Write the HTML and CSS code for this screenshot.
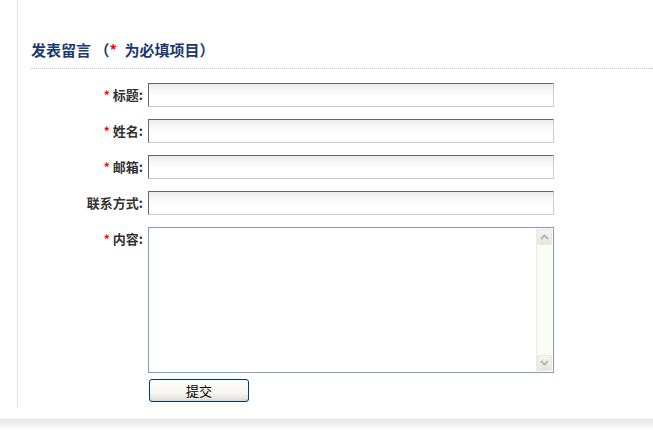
FILE: index.html
```html
<!DOCTYPE html>
<html lang="zh-CN">
<head>
<meta charset="utf-8">
<title>发表留言</title>
<link rel="stylesheet" href="styles.css">
</head>
<body>
<div class="wrap">
  <h2 class="title">发表留言 （<span class="req req-h">*</span> 为必填项目）</h2>
  <form class="form">
    <div class="row">
      <label class="lbl"><span class="req">*</span> 标题:</label>
      <input class="inp" type="text">
    </div>
    <div class="row">
      <label class="lbl"><span class="req">*</span> 姓名:</label>
      <input class="inp" type="text">
    </div>
    <div class="row">
      <label class="lbl"><span class="req">*</span> 邮箱:</label>
      <input class="inp" type="text">
    </div>
    <div class="row">
      <label class="lbl">联系方式:</label>
      <input class="inp" type="text">
    </div>
    <div class="row row-top">
      <label class="lbl lbl-top"><span class="req">*</span> 内容:</label>
      <div class="area">
        <textarea class="ta"></textarea>
        <div class="sb">
          <div class="sb-btn">
            <svg width="9" height="6" viewBox="0 0 9 6"><path d="M1 5 L4.5 1.5 L8 5" fill="none" stroke="#b8b8ae" stroke-width="2"/></svg>
          </div>
          <div class="sb-track"></div>
          <div class="sb-btn">
            <svg width="9" height="6" viewBox="0 0 9 6"><path d="M1 1 L4.5 4.5 L8 1" fill="none" stroke="#b8b8ae" stroke-width="2"/></svg>
          </div>
        </div>
      </div>
    </div>
    <div class="row row-btn">
      <button class="btn" type="button">提交</button>
    </div>
  </form>
</div>
<div class="foot"></div>
</body>
</html>
```

FILE: styles.css
```css
html, body {
  margin: 0;
  padding: 0;
  background: #fff;
}
body {
  font-family: "Noto Sans CJK SC", "Liberation Sans", sans-serif;
  width: 653px;
  overflow: hidden;
}
.wrap {
  margin-left: 17px;
  border-left: 1px dotted #cfcfcf;
  padding-top: 40px;
  padding-bottom: 5px;
}
.title {
  margin: 0 0 0 13px;
  font-size: 15px;
  line-height: 20px;
  font-weight: bold;
  color: #1b3a6f;
  padding-bottom: 8px;
  border-bottom: 1px dotted #c4c4c4;
}
.req {
  color: #f00;
  font-weight: bold;
}
.req-h {
  margin-right: 4px;
}
.form {
  margin: 14px 0 0 0;
}
.row {
  display: flex;
  align-items: center;
  margin-bottom: 12px;
}
.row-top {
  align-items: flex-start;
  margin-bottom: 6px;
}
.row-btn {
  margin-bottom: 0;
  padding-left: 131px;
}
.lbl {
  width: 125px;
  margin-right: 5px;
  text-align: right;
  font-size: 13px;
  font-weight: bold;
  color: #333;
  line-height: 16px;
}
.lbl .req {
  font-size: 12px;
}
.lbl-top {
  margin-top: 4px;
}
.inp {
  box-sizing: border-box;
  width: 406px;
  height: 24px;
  margin: 0;
  padding: 2px 4px;
  border: 1px solid #cbcbcb;
  border-top-color: #656565;
  border-left-color: #6a6a6a;
  background: linear-gradient(to bottom, #ececec 0, #f7f7f7 6px, #fff 14px);
  font-size: 12px;
  outline: none;
}
.area {
  box-sizing: border-box;
  width: 406px;
  height: 146px;
  border: 1px solid #7f9db9;
  display: flex;
  background: #fff;
}
.ta {
  flex: 1;
  border: 0;
  margin: 0;
  padding: 2px;
  resize: none;
  outline: none;
  background: #fff;
  font-size: 12px;
}
.sb {
  width: 16px;
  display: flex;
  flex-direction: column;
  background: #fcfcf6;
  border-left: 1px solid #ecebe2;
}
.sb-track {
  flex: 1;
}
.sb-btn {
  box-sizing: border-box;
  height: 16px;
  margin: 1px 1px 0 0;
  border: 1px solid #e8e8e0;
  border-radius: 2px;
  background: linear-gradient(to bottom, #f4f4ee, #e6e6dc);
  display: flex;
  align-items: center;
  justify-content: center;
}
.sb-btn:last-child {
  margin: 0 1px 1px 0;
}
.btn {
  box-sizing: border-box;
  width: 100px;
  height: 23px;
  margin: 0;
  padding: 0;
  border: 1px solid #003c74;
  border-radius: 3px;
  background: linear-gradient(to bottom, #ffffff 0, #f5f5f1 60%, #e6e4dc 90%, #d8d4c8 100%);
  font-family: "Noto Sans CJK SC", sans-serif;
  font-size: 13px;
  color: #000;
  line-height: 20px;
}
.foot {
  margin-top: 11px;
  height: 12px;
  background: linear-gradient(to bottom, #f8f8f8 0, #e6e6e6 2px, #f2f2f2 7px, #fff 12px);
}
```
